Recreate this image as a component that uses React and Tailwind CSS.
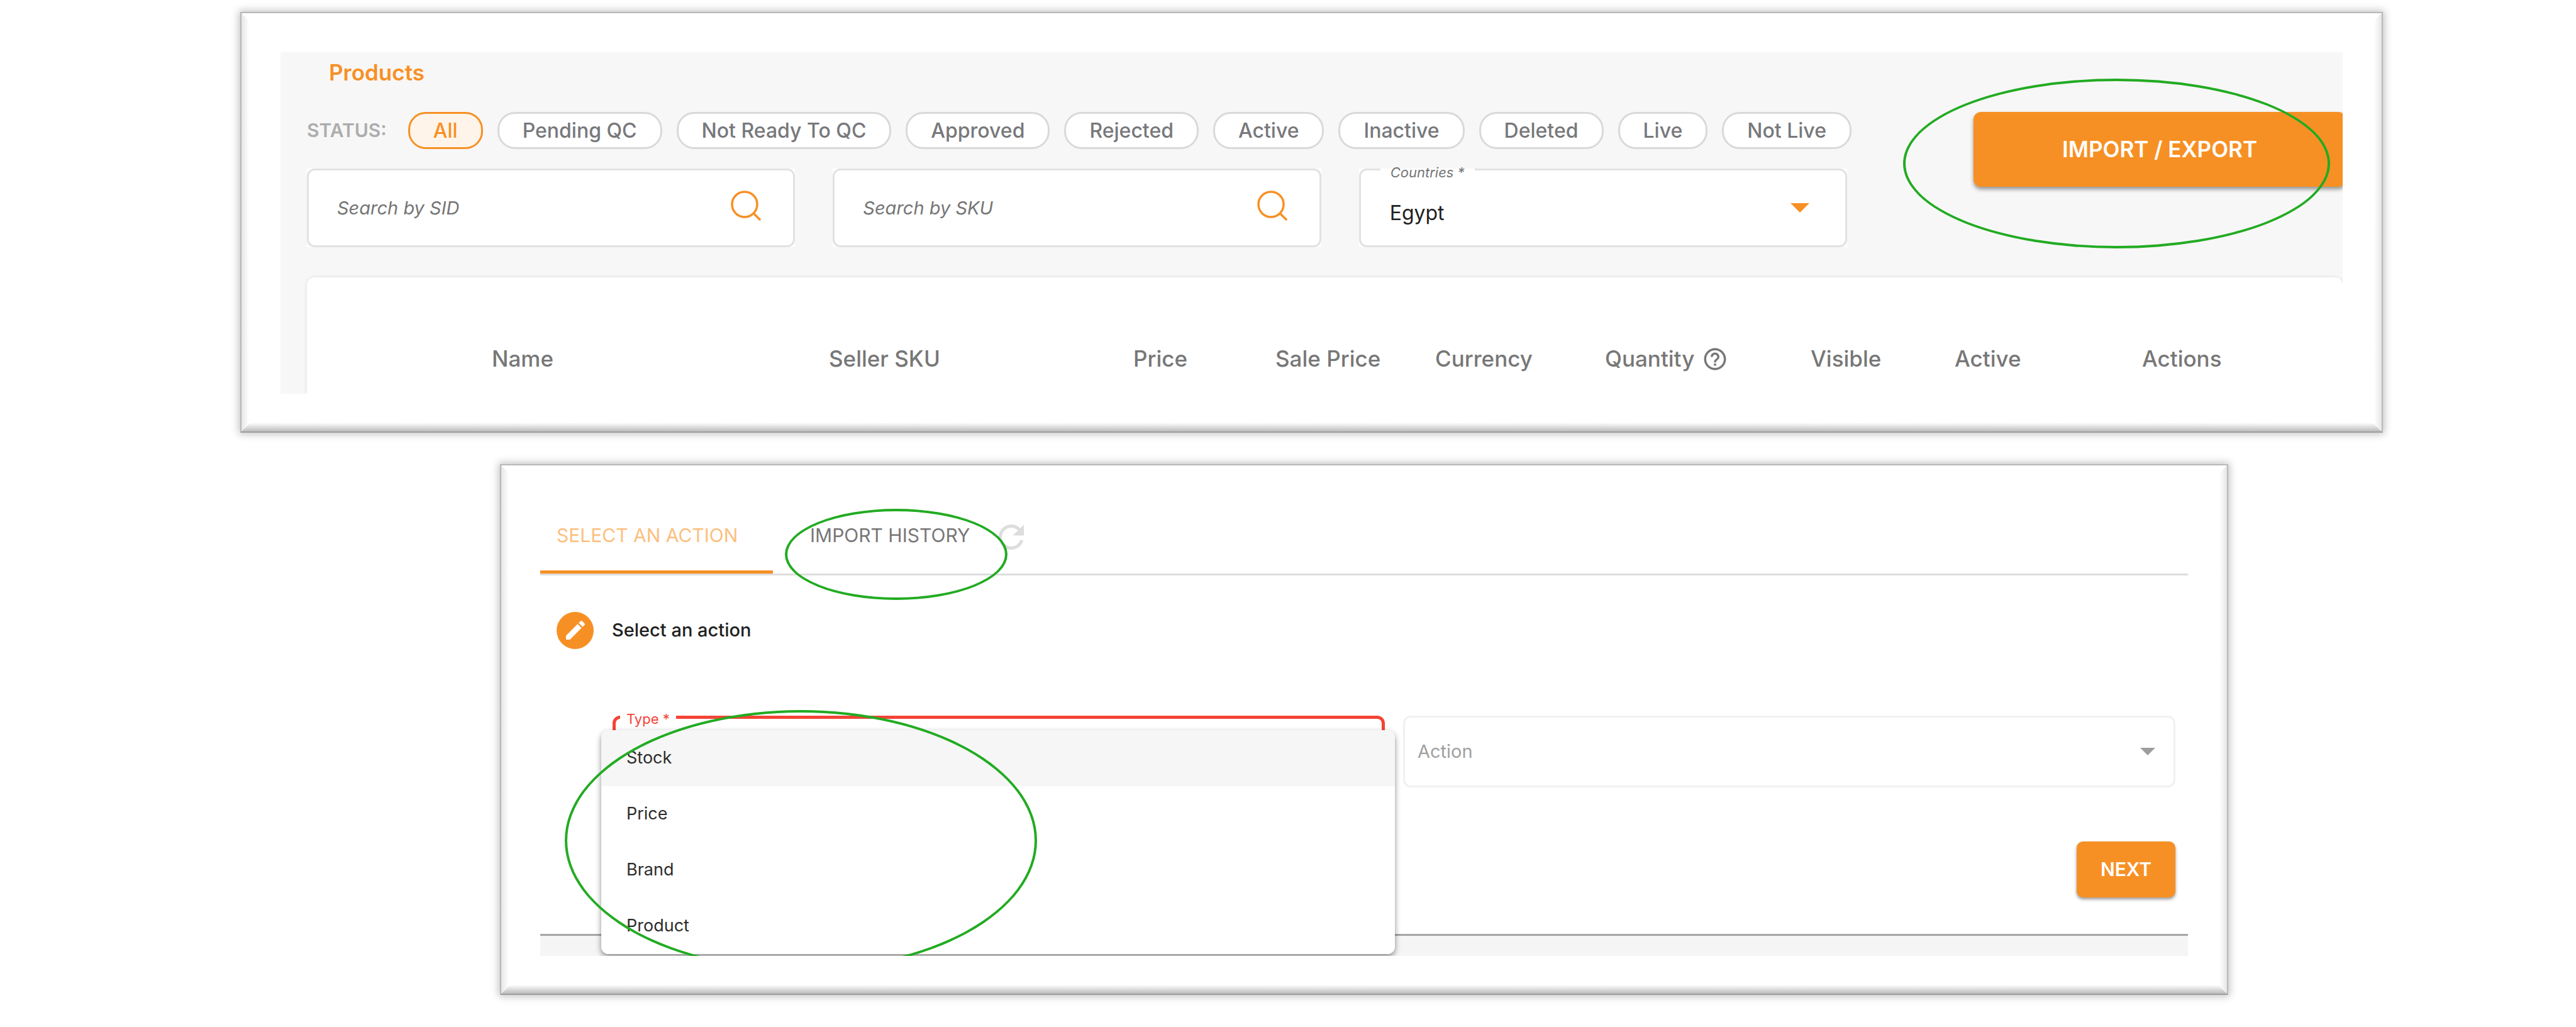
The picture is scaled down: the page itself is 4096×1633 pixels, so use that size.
import { MdRefresh, MdEdit, MdHelpOutline } from "react-icons/md";

const statuses = ["All", "Pending QC", "Not Ready To QC", "Approved", "Rejected", "Active", "Inactive", "Deleted", "Live", "Not Live"];
const types = ["Stock", "Price", "Brand", "Product"];

function Bevel() {
  return (
    <div aria-hidden="true" className="pointer-events-none absolute inset-0">
      <div className="absolute inset-y-0 left-0 w-3 bg-linear-to-r from-[#e6e6e6] to-white [clip-path:polygon(0_0,100%_12px,100%_calc(100%-14px),0_100%)]" />
      <div className="absolute inset-y-0 right-0 w-3 bg-linear-to-l from-[#e6e6e6] to-white [clip-path:polygon(100%_0,0_12px,0_calc(100%-14px),100%_100%)]" />
      <div className="absolute inset-x-0 bottom-0 h-3.5 bg-linear-to-t from-[#bcbcbc] to-white [clip-path:polygon(0_100%,100%_100%,calc(100%-14px)_0,14px_0)]" />
    </div>
  );
}

function Frame({ className, children }) {
  return (
    <section className={"relative border-2 border-[#b8b8b8] border-b-[#9e9e9e] bg-white px-[62px] pt-[62px] pb-[60px] shadow-[0_0_12px_2px_rgba(0,0,0,0.25)] " + className}>
      <Bevel />
      {children}
    </section>
  );
}

function Ring({ className }) {
  return <div aria-hidden="true" className={"pointer-events-none absolute rounded-[50%] border-4 border-[#22ab22] " + className} />;
}

function SearchIcon() {
  return (
    <svg viewBox="0 0 48 48" className="size-12" fill="none" stroke="#f79024" strokeWidth="3.500" strokeLinecap="round">
      <circle cx="22" cy="22" r="20" />
      <path d="M36.500 36.500 L46 46" />
    </svg>
  );
}

function SearchField({ label }) {
  return (
    <div className="flex-1 bg-white">
      <div className="flex h-[125px] items-center rounded-xl border-3 border-[#e2e2e2] pr-[51px] pl-[45px]">
        <input type="text" aria-label={label} placeholder={label} className="min-w-0 flex-1 text-[29px] italic outline-none placeholder:text-[#757575]" />
        <button type="button" aria-label={label} className="pb-2">
          <SearchIcon />
        </button>
      </div>
    </div>
  );
}

function Caret({ className }) {
  return (
    <svg viewBox="0 0 10 5" className={"pointer-events-none absolute " + className}>
      <path d="M0 0h10L5 5z" fill="currentColor" />
    </svg>
  );
}

function ProductsPanel() {
  return (
    <Frame className="mr-[307px] ml-[382px]">
      <div className="relative overflow-hidden bg-[#f7f7f7] pl-[42px]">
        <h1 className="pt-[10px] pl-[35px] text-[35px] leading-[44px] font-semibold text-[#f79024]">Products</h1>
        <div className="mt-[41px] flex">
          <div className="w-[2449px]">
            <div className="flex h-[59px] items-center gap-[23px]">
              <span className="mr-[11px] text-[30px] font-semibold text-[#adadad]">STATUS:</span>
              {statuses.map((s) => (
                <button
                  key={s}
                  type="button"
                  className={
                    "h-[59px] rounded-[28px] border-3 px-[37px] text-[32px] font-medium whitespace-nowrap " +
                    (s === "All" ? "border-[#f79024] bg-[#fff4e9] text-[#f79024]" : "border-[#d9d9db] bg-white text-[#77787b]")
                  }
                >
                  {s}
                </button>
              ))}
            </div>
            <div className="mt-[31px] flex gap-[60px]">
              <SearchField label="Search by SID" />
              <SearchField label="Search by SKU" />
              <div className="relative flex-1 bg-white">
                <select id="countries" className="block h-[125px] w-full appearance-none rounded-xl border-3 border-[#e2e2e2] pt-4 pl-[46px] text-[32px] text-[#212121]">
                  <option>Egypt</option>
                </select>
                <label htmlFor="countries" className="absolute top-0 left-[34px] h-3 bg-white px-4 text-[22px] leading-3 text-[#757575] italic">
                  Countries *
                </label>
                <Caret className="top-[55px] right-[60px] h-[15px] w-[30px] text-[#f79024]" />
              </div>
            </div>
          </div>
          <button type="button" className="-mr-[5px] ml-auto h-[119px] w-[592px] rounded-xl bg-[#f79024] text-[35px] font-semibold text-white shadow-[0_4px_6px_rgba(0,0,0,0.4)]">
            IMPORT / EXPORT
          </button>
        </div>
        <div className="mt-12 rounded-t-xl bg-white shadow-[0_0_5px_rgba(0,0,0,0.12)]">
          <table className="w-full table-fixed">
            <colgroup>
              <col className="w-[294px]" />
              <col className="w-[536px]" />
              <col className="w-[484px]" />
              <col className="w-[226px]" />
              <col className="w-[254px]" />
              <col className="w-[270px]" />
              <col className="w-[327px]" />
              <col className="w-[229px]" />
              <col className="w-[298px]" />
              <col />
            </colgroup>
            <thead>
              <tr className="h-[185px] text-left align-middle text-[35px] text-[#777777] [&>th]:pt-[74px] [&>th]:font-medium">
                <td />
                {["Name", "Seller SKU", "Price", "Sale Price", "Currency", "Quantity", "Visible", "Active", "Actions"].map((h) => (
                  <th key={h} scope="col" className="whitespace-nowrap">
                    {h === "Quantity" ? (
                      <span className="flex items-center gap-3">
                        {h} <MdHelpOutline className="size-[42px]" />
                      </span>
                    ) : (
                      h
                    )}
                  </th>
                ))}
              </tr>
            </thead>
          </table>
        </div>
      </div>
      <Ring className="top-[104px] right-[82px] h-[270px] w-[679px]" />
    </Frame>
  );
}

function ImportPanel() {
  return (
    <Frame className="mt-[50px] mr-[553px] ml-[795px]">
      <div className="relative overflow-hidden">
        <div role="tablist" className="flex h-[113px] border-b-3 border-[#dddddd] text-[30px]">
          <button type="button" role="tab" aria-selected="true" className="w-[370px] border-b-5 border-[#f79024] pb-[6px] pl-[26px] text-left text-[#fbc07f]">
            SELECT AN ACTION
          </button>
          <button type="button" role="tab" aria-selected="false" className="pb-[11px] pl-[59px] text-[#777777]">
            IMPORT HISTORY
          </button>
          <button type="button" aria-label="Refresh" className="pb-[6px] pl-9 text-[#dddddd]">
            <MdRefresh className="size-[60px]" />
          </button>
        </div>
        <div className="pr-5 pl-[26px]">
          <div className="mt-[57px] flex h-[60px] items-center gap-[29px]">
            <span className="flex size-[59px] items-center justify-center rounded-full bg-[#f79024] text-white">
              <MdEdit className="size-10" />
            </span>
            <h2 className="text-[29px] font-medium text-[#212121]">Select an action</h2>
          </div>
          <div className="mt-[106px] ml-[89px] flex gap-[29px]">
            <div className="relative flex-1">
              <select id="type" className="block h-[114px] w-full appearance-none rounded-xl border-5 border-[#f44336]" />
              <label htmlFor="type" className="absolute top-0 left-3 h-[10px] bg-white px-[10px] text-[22px] leading-[10px] text-[#f44336]">
                Type *
              </label>
            </div>
            <div className="relative flex-1">
              <select aria-label="Action" disabled className="block h-[114px] w-full appearance-none rounded-xl border-3 border-[#f1f1f1] pl-5 text-[29px] text-[#a0a0a0] opacity-100">
                <option>Action</option>
              </select>
              <Caret className="top-[51px] right-8 h-3 w-6 text-[#9e9e9e]" />
            </div>
          </div>
          <div className="mt-[86px] flex justify-end">
            <button type="button" className="h-[89px] w-[157px] rounded-[10px] bg-[#f79024] text-[30px] font-semibold text-white shadow-[0_3px_5px_rgba(0,0,0,0.4)]">
              NEXT
            </button>
          </div>
        </div>
        <div className="mt-[58px] h-[35px] border-t-3 border-[#a5a5a5] bg-[#f5f5f5]" />
        <ul role="listbox" aria-label="Type" className="absolute top-[359px] left-[97px] w-[1262px] overflow-hidden rounded-xl bg-white text-[27px] text-[#2d2d2d] shadow-[0_4px_10px_rgba(0,0,0,0.45)]">
          {types.map((t, i) => (
            <li key={t} role="option" aria-selected={i === 0} className={"flex h-[89px] items-center pl-10 " + (i === 0 ? "bg-[#f6f6f6]" : "bg-white")}>
              {t}
            </li>
          ))}
        </ul>
        <Ring className="top-[327px] left-[39px] h-[415px] w-[751px]" />
        <Ring className="top-[7px] left-[389px] h-[145px] w-[354px]" />
      </div>
    </Frame>
  );
}

export default function App() {
  return (
    <main className="min-h-screen bg-white pt-[19px] font-['Inter',sans-serif]">
      <ProductsPanel />
      <ImportPanel />
    </main>
  );
}
